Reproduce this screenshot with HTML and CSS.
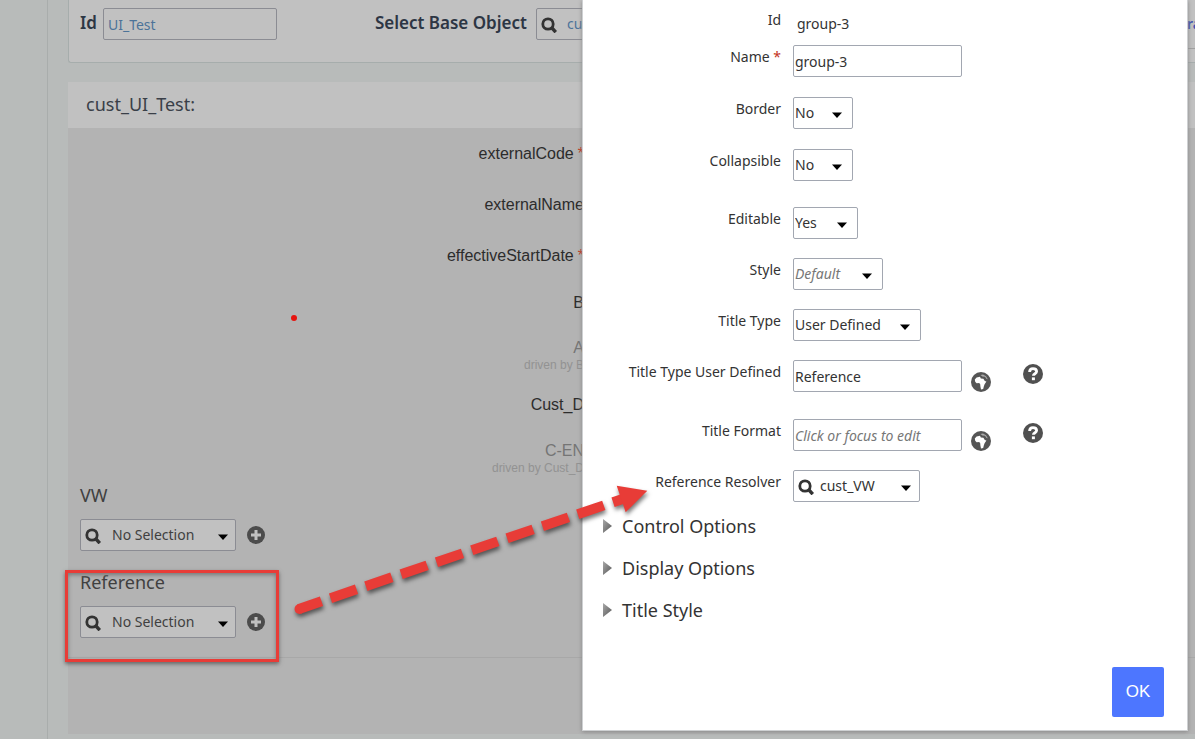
FILE: index.html
```html
<!DOCTYPE html>
<html lang="en">
<head>
<meta charset="utf-8">
<title>Configure UI</title>
<link rel="stylesheet" href="styles.css">
</head>
<body>
<svg class="defs" width="0" height="0" aria-hidden="true">
  <symbol id="search" viewBox="0 0 16 16"><circle cx="7" cy="7" r="5.2" fill="none" stroke="currentColor" stroke-width="2.8"/><path d="M10.5 10.5 14.8 15.200" stroke="currentColor" stroke-width="3.4"/></symbol>
  <symbol id="caret" viewBox="0 0 10 6"><path d="M0 0.4h10L5 6z" fill="currentColor"/></symbol>
  <symbol id="plus" viewBox="0 0 18 18"><circle cx="9" cy="9" r="9" fill="currentColor"/><path d="M9 4v10M4 9h10" stroke="#c1c1c1" stroke-width="3"/></symbol>
  <symbol id="globe" viewBox="0 0 20 20"><circle cx="10" cy="10" r="10" fill="#555"/><path d="M3.8 7.6 5.600 5.400 9 4.800l.8 1.800 2.600.2 1.400 2.200 1.600.6-1.800 2.600-.8 2.400-.6 2.400-2.200.4-.6-3-.2-2.200-1-1.200-2.600.2-1.400-1.400z" fill="#fff"/><path d="M9.5 3 12 2.600l3 1.600 1.800 3-1.200-.2-1.600-2.200-2.600-.4z" fill="#aaa"/></symbol>
  <symbol id="help" viewBox="0 0 20 20"><circle cx="10" cy="10" r="10" fill="#505050"/><path d="M6.6 8C6.6 5.6 8 4.6 10 4.6s3.6 1 3.6 2.900c0 2.200-3.200 2.300-3.200 4.300" fill="none" stroke="#fff" stroke-width="2.8"/><rect x="8.900" y="13.400" width="3" height="2.800" fill="#fff"/></symbol>
  <linearGradient id="shade" x1="0" y1="0" x2="1" y2="1"><stop offset="0" stop-color="#aaa"/><stop offset="1" stop-color="#555"/></linearGradient>
  <symbol id="twist" viewBox="0 0 9 14"><path d="M0 0 9 7 0 14z" fill="url(#shade)"/></symbol>
</svg>

<div class="page">
  <aside class="rail"></aside>
  <main class="main">
    <header class="toolbar">
      <div class="pair">
        <label class="strong" for="ui-id">Id</label>
        <input class="box wide muted-blue" id="ui-id" value="UI_Test">
      </div>
      <div class="pair base">
        <label class="strong" for="base">Select Base Object</label>
        <span class="pick">
          <svg class="search"><use href="#search"/></svg>
          <select class="box searchable muted-blue" id="base"><option>cust_UI_Test</option></select>
        </span>
      </div>
      <div class="actions"><a class="link" href="#">ra</a></div>
    </header>

    <section class="card">
      <h1 class="card-title">cust_UI_Test:</h1>
      <div class="card-body">
        <div class="fields">
          <div class="field"><span>externalCode</span><b class="star">*</b></div>
          <div class="field"><span>externalName</span></div>
          <div class="field"><span>effectiveStartDate</span><b class="star">*</b></div>
          <div class="field short"><span>B</span></div>
          <div class="field driven"><span>A</span><small>driven by B</small></div>
          <div class="field"><span>Cust_D</span></div>
          <div class="field driven"><span>C-EN</span><small>driven by Cust_D</small></div>
        </div>
        <div class="group">
          <label class="group-title" for="vw">VW</label>
          <div class="group-row">
            <span class="pick"><svg class="search"><use href="#search"/></svg><select class="box searchable selection" id="vw"><option>No Selection</option></select><svg class="caret"><use href="#caret"/></svg></span>
            <button class="add" aria-label="Add VW"><svg width="18" height="18"><use href="#plus"/></svg></button>
          </div>
        </div>
        <div class="group">
          <label class="group-title" for="ref">Reference</label>
          <div class="group-row">
            <span class="pick"><svg class="search"><use href="#search"/></svg><select class="box searchable selection" id="ref"><option>No Selection</option></select><svg class="caret"><use href="#caret"/></svg></span>
            <button class="add" aria-label="Add Reference"><svg width="18" height="18"><use href="#plus"/></svg></button>
          </div>
        </div>
        <div class="card-foot"></div>
      </div>
    </section>
  </main>
</div>

<div class="dialog" role="dialog" aria-label="Group properties">
  <div class="row id-row"><span class="name">Id</span><span class="value">group-3</span></div>
  <div class="rows first">
    <div class="row"><label class="name" for="f-name">Name <b class="star">*</b></label><input class="box text" id="f-name" value="group-3"></div>
    <div class="row"><label class="name" for="f-border">Border</label><span class="pick"><select class="box no" id="f-border"><option>No</option></select><svg class="caret"><use href="#caret"/></svg></span></div>
    <div class="row"><label class="name" for="f-coll">Collapsible</label><span class="pick"><select class="box no" id="f-coll"><option>No</option></select><svg class="caret"><use href="#caret"/></svg></span></div>
  </div>
  <div class="rows">
    <div class="row"><label class="name" for="f-edit">Editable</label><span class="pick"><select class="box yes" id="f-edit"><option>Yes</option></select><svg class="caret"><use href="#caret"/></svg></span></div>
    <div class="row"><label class="name" for="f-style">Style</label><span class="pick"><select class="box default hint" id="f-style"><option>Default</option></select><svg class="caret"><use href="#caret"/></svg></span></div>
    <div class="row"><label class="name" for="f-type">Title Type</label><span class="pick"><select class="box defined" id="f-type"><option>User Defined</option></select><svg class="caret"><use href="#caret"/></svg></span></div>
    <div class="row"><label class="name" for="f-user">Title Type User Defined</label><span class="extras"><input class="box text" id="f-user" value="Reference"><button class="globe" aria-label="Translate"><svg width="20" height="20"><use href="#globe"/></svg></button><button class="help" aria-label="Help"><svg width="20" height="20"><use href="#help"/></svg></button></span></div>
  </div>
  <div class="rows">
    <div class="row"><label class="name" for="f-format">Title Format</label><span class="extras"><input class="box text" id="f-format" placeholder="Click or focus to edit"><button class="globe" aria-label="Translate"><svg width="20" height="20"><use href="#globe"/></svg></button><button class="help" aria-label="Help"><svg width="20" height="20"><use href="#help"/></svg></button></span></div>
    <div class="row"><label class="name" for="f-res">Reference Resolver</label><span class="pick"><svg class="search"><use href="#search"/></svg><select class="box resolver" id="f-res"><option>cust_VW</option></select><svg class="caret"><use href="#caret"/></svg></span></div>
  </div>
  <div class="sections">
    <button class="section"><svg width="9" height="14"><use href="#twist"/></svg>Control Options</button>
    <button class="section"><svg width="9" height="14"><use href="#twist"/></svg>Display Options</button>
    <button class="section"><svg width="9" height="14"><use href="#twist"/></svg>Title Style</button>
  </div>
  <div class="dialog-foot"><button class="ok">OK</button></div>
</div>

<div class="highlight"></div>
<div class="dot"></div>
<svg class="arrow" width="370" height="150" viewBox="290 480 370 150" aria-hidden="true">
  <g fill="none" stroke="#e83c37" stroke-width="10">
    <circle cx="299.500" cy="609" r="5" fill="#e83c37" stroke="none"/>
    <path d="M299 609 321.500 601.300"/>
    <path d="M330.500 598.200 624 498.500" stroke-dasharray="27.5 9.800"/>
  </g>
  <path d="M616.700 485.700 647.300 490.700 625.700 512.300z" fill="#e83c37"/>
</svg>
</body>
</html>
```
FILE: styles.css
```css
* { box-sizing: border-box; }

body {
  margin: 0;
  min-height: 100vh;
  position: relative;
  overflow: hidden;
  background: #b8bbba;
  color: #333;
  font: 14px/20px "Noto Sans", sans-serif;
}

button { padding: 0; border: 0; background: none; font: inherit; color: inherit; }
button svg { display: block; }
.defs { position: absolute; }

.page { display: flex; min-height: 100vh; }
.rail { flex: 0 0 48px; border-right: 1px solid #a9adac; }
.main { flex: 1; min-width: 0; padding-left: 20px; }

.box {
  appearance: none;
  height: 32px;
  margin: 0;
  padding: 0 1px;
  border: 1px solid #a2a7b1;
  border-radius: 2px;
  background: #fff;
  color: #333;
  font: inherit;
}
.page .box { background: #c1c1c1; border-color: #8b8c93; color: #404040; }
.page .muted-blue { color: #4c7399; }

.pick { position: relative; display: inline-flex; justify-self: start; }
.caret { position: absolute; right: 11px; top: 15px; width: 10px; height: 6px; color: #000; pointer-events: none; }
.search { position: absolute; left: 5px; top: 9px; width: 16px; height: 16px; color: #333; pointer-events: none; }

.toolbar {
  display: flex;
  height: 63px;
  border: 1px solid #a6adac;
  border-top: 0;
  border-right: 0;
  border-bottom-left-radius: 3px;
  background: #c1c1c1;
}
.pair { display: flex; align-items: flex-start; gap: 6px; padding: 8px 0 0 11px; }
.base { gap: 9px; padding-left: 98px; }
.strong { color: #2d3644; font-size: 17px; line-height: 30px; font-weight: 600; }
.wide { width: 174px; padding-left: 4px; }
.searchable { padding-left: 31px; }
.base .searchable { padding-left: 30px; }
.actions { flex: 1; height: 49px; margin-right: -6px; padding-top: 14px; border-bottom: 1px solid #a0a0a0; text-align: right; }
.link { color: #4353b0; font-weight: 600; text-decoration: none; }

.card { margin-top: 19px; }
.card-title { margin: 0; padding: 10px 18px 12px; background: #c1c1c1; color: #3a3f48; font-size: 18px; line-height: 24px; font-weight: 400; }
.card-body { min-height: 606px; background: #b3b3b3; }
.fields { width: 516px; padding-top: 1px; color: #2c2c2c; font: 16px/18px "Liberation Sans", sans-serif; }
.field { display: flex; justify-content: flex-end; gap: 4px; height: 51px; padding-top: 16px; }
.short { height: 46px; padding-top: 12px; }
.driven { flex-direction: column; justify-content: flex-start; align-items: flex-end; gap: 0; height: 52px; padding-top: 11px; color: #757575; }
.driven small { color: #929292; font-size: 12px; line-height: 16px; }
.star { color: #c4331c; font-weight: 400; }

.group { padding: 0 12px 19px; }
.group-title { display: block; color: #404040; font-size: 18px; line-height: 24px; margin-bottom: 12px; }
.group-row { display: flex; align-items: center; gap: 11px; }
.selection { width: 156px; }
.group .caret { right: 8px; }
.add { color: #4c4c4c; }
.card-foot { border-top: 1px solid #a8a8a8; }

.dialog {
  position: absolute;
  top: 0;
  left: 582px;
  right: 7px;
  padding-bottom: 13px;
  border: 1px solid #ced0d2;
  border-top: 0;
  background: #fff;
  box-shadow: 0 1px 4px #888;
}
.row { display: grid; grid-template-columns: 198px 1fr; column-gap: 12px; align-items: start; }
.id-row { padding-top: 8px; }
.name { line-height: 24px; text-align: right; }
.value { padding: 6px 0 11px 4px; line-height: 20px; }
.rows { display: grid; row-gap: 19px; margin-bottom: 27px; }
.first { row-gap: 20px; margin-bottom: 26px; }
.text { width: 169px; }
.no { width: 60px; }
.yes { width: 65px; }
.default { width: 90px; }
.defined { width: 128px; }
.resolver { width: 127px; padding-left: 26px; }
.dialog .resolver + .caret { right: 9px; }
.hint, .text::placeholder { color: #777; font-style: italic; }
.extras { display: flex; align-items: flex-start; gap: 9px; }
.globe { margin-top: 12px; }
.help { margin: 4px 0 0 23px; }

.sections { display: grid; justify-items: start; row-gap: 18px; margin-top: -15px; padding-left: 20px; }
.section { display: flex; align-items: center; gap: 10px; font-size: 18px; line-height: 24px; }
.dialog-foot { display: flex; justify-content: flex-end; padding: 45px 23px 0; }
.ok { width: 52px; height: 50px; border-radius: 2px; background: #4d76ff; color: #fff; font: 17px/24px "Liberation Sans", sans-serif; }

.highlight { position: absolute; left: 65px; top: 570px; width: 214px; height: 92px; border: 3px solid #e83c37; box-shadow: 0 2px 4px #666, inset 0 2px 4px #777; pointer-events: none; }
.dot { position: absolute; left: 291px; top: 315px; width: 6px; height: 6px; border-radius: 50%; background: #e6140f; }
.arrow { position: absolute; left: 290px; top: 480px; filter: drop-shadow(1px 3px 2px #0008); pointer-events: none; }
```
